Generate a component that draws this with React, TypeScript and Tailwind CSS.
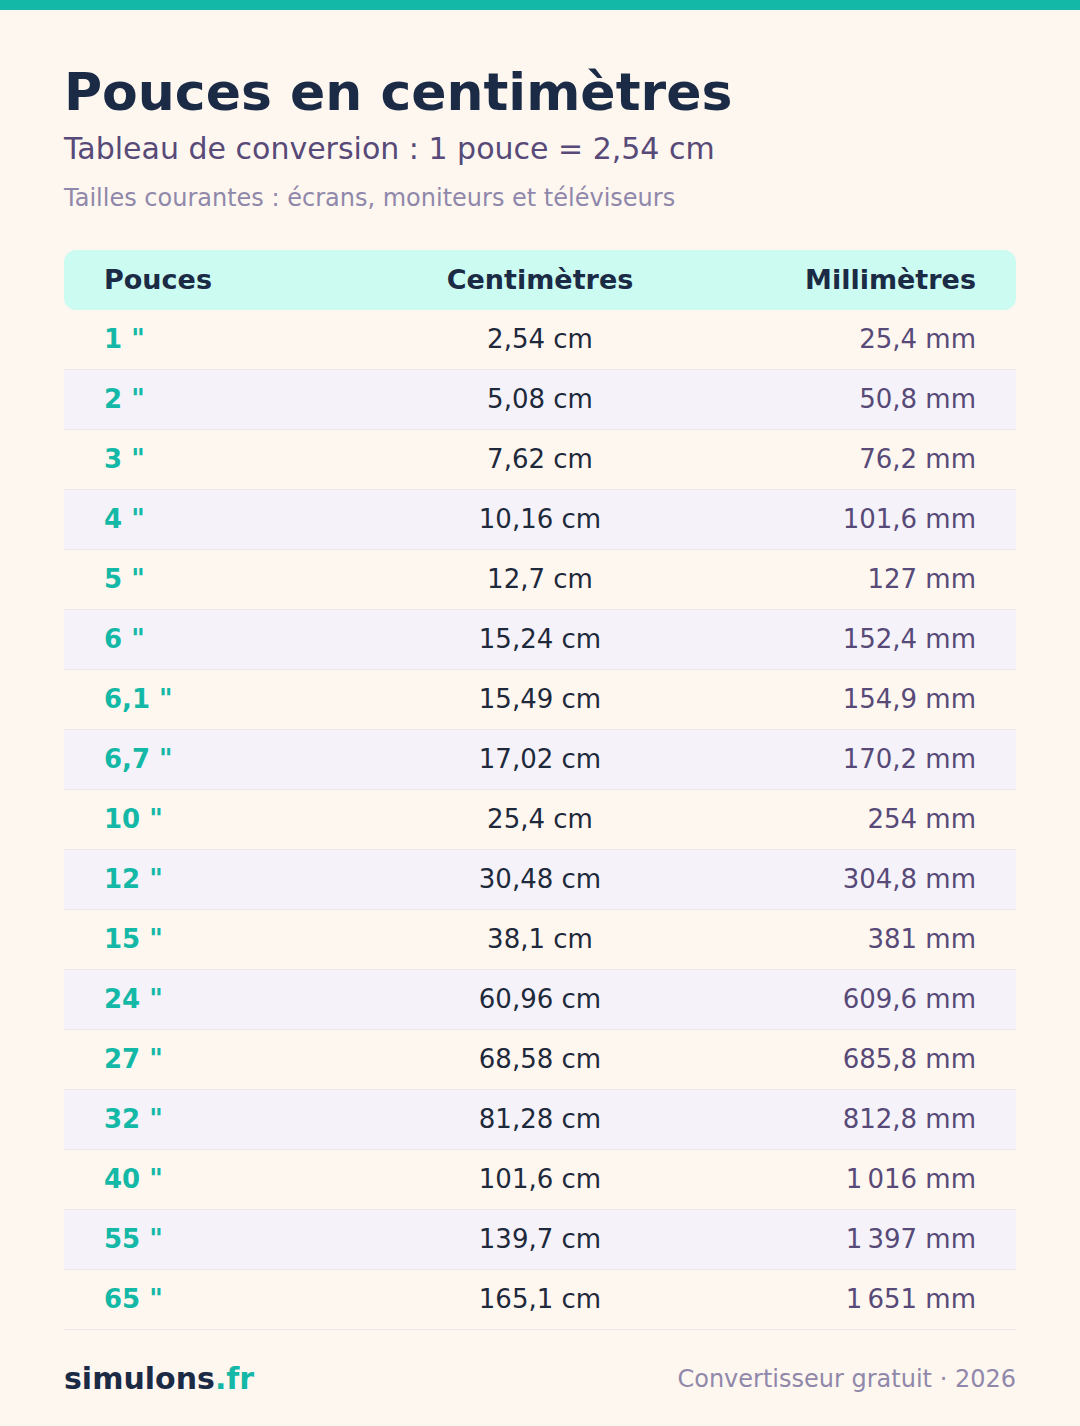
import React from "react";

const rows: [string, string, string][] = [
  ["1", "2,54 cm", "25,4 mm"],
  ["2", "5,08 cm", "50,8 mm"],
  ["3", "7,62 cm", "76,2 mm"],
  ["4", "10,16 cm", "101,6 mm"],
  ["5", "12,7 cm", "127 mm"],
  ["6", "15,24 cm", "152,4 mm"],
  ["6,1", "15,49 cm", "154,9 mm"],
  ["6,7", "17,02 cm", "170,2 mm"],
  ["10", "25,4 cm", "254 mm"],
  ["12", "30,48 cm", "304,8 mm"],
  ["15", "38,1 cm", "381 mm"],
  ["24", "60,96 cm", "609,6 mm"],
  ["27", "68,58 cm", "685,8 mm"],
  ["32", "81,28 cm", "812,8 mm"],
  ["40", "101,6 cm", "1\u202F016 mm"],
  ["55", "139,7 cm", "1\u202F397 mm"],
  ["65", "165,1 cm", "1\u202F651 mm"],
];

export default function App() {
  return (
    <div
      className="min-h-[1426px] w-[1080px] bg-[#fef7f0]"
      style={{ fontFamily: '"DejaVu Sans", Verdana, sans-serif' }}
    >
      <div className="h-[10px] bg-[#14b8a6]" />
      <div className="px-16">
        <h1 className="mt-[51px] text-[52px] font-bold leading-[62px] text-[#1b2a45]">
          Pouces en centimètres
        </h1>
        <p className="mt-[8px] text-[30px] leading-[36px] text-[#574a78]">
          Tableau de conversion : 1 pouce = 2,54 cm
        </p>
        <p className="mt-[17px] text-[24px] leading-[28px] text-[#9088aa]">
          Tailles courantes : écrans, moniteurs et téléviseurs
        </p>

        <div className="mt-[38px]">
          <div className="grid h-[60px] grid-cols-3 items-center rounded-xl bg-[#ccfbf1] px-10 text-[27px] font-bold text-[#1b2a45]">
            <div>Pouces</div>
            <div className="text-center">Centimètres</div>
            <div className="text-right">Millimètres</div>
          </div>
          {rows.map(([p, cm, mm], i) => (
            <div
              key={p}
              className={`grid h-[60px] grid-cols-3 items-center border-b border-[#ece8ee] px-10 text-[26px] ${
                i % 2 === 1 ? "bg-[#f5f3f9]" : ""
              }`}
            >
              <div className="font-bold text-[#14b8a6]">{p} "</div>
              <div className="text-center text-[#1e293b]">{cm}</div>
              <div className="text-right text-[#574a78]">{mm}</div>
            </div>
          ))}
        </div>

        <div className="mt-[26px] flex items-center justify-between">
          <div className="text-[30px] font-bold text-[#1b2a45]">
            simulons<span className="text-[#14b8a6]">.fr</span>
          </div>
          <div className="text-[24px] text-[#9088aa]">Convertisseur gratuit · 2026</div>
        </div>
      </div>
    </div>
  );
}
